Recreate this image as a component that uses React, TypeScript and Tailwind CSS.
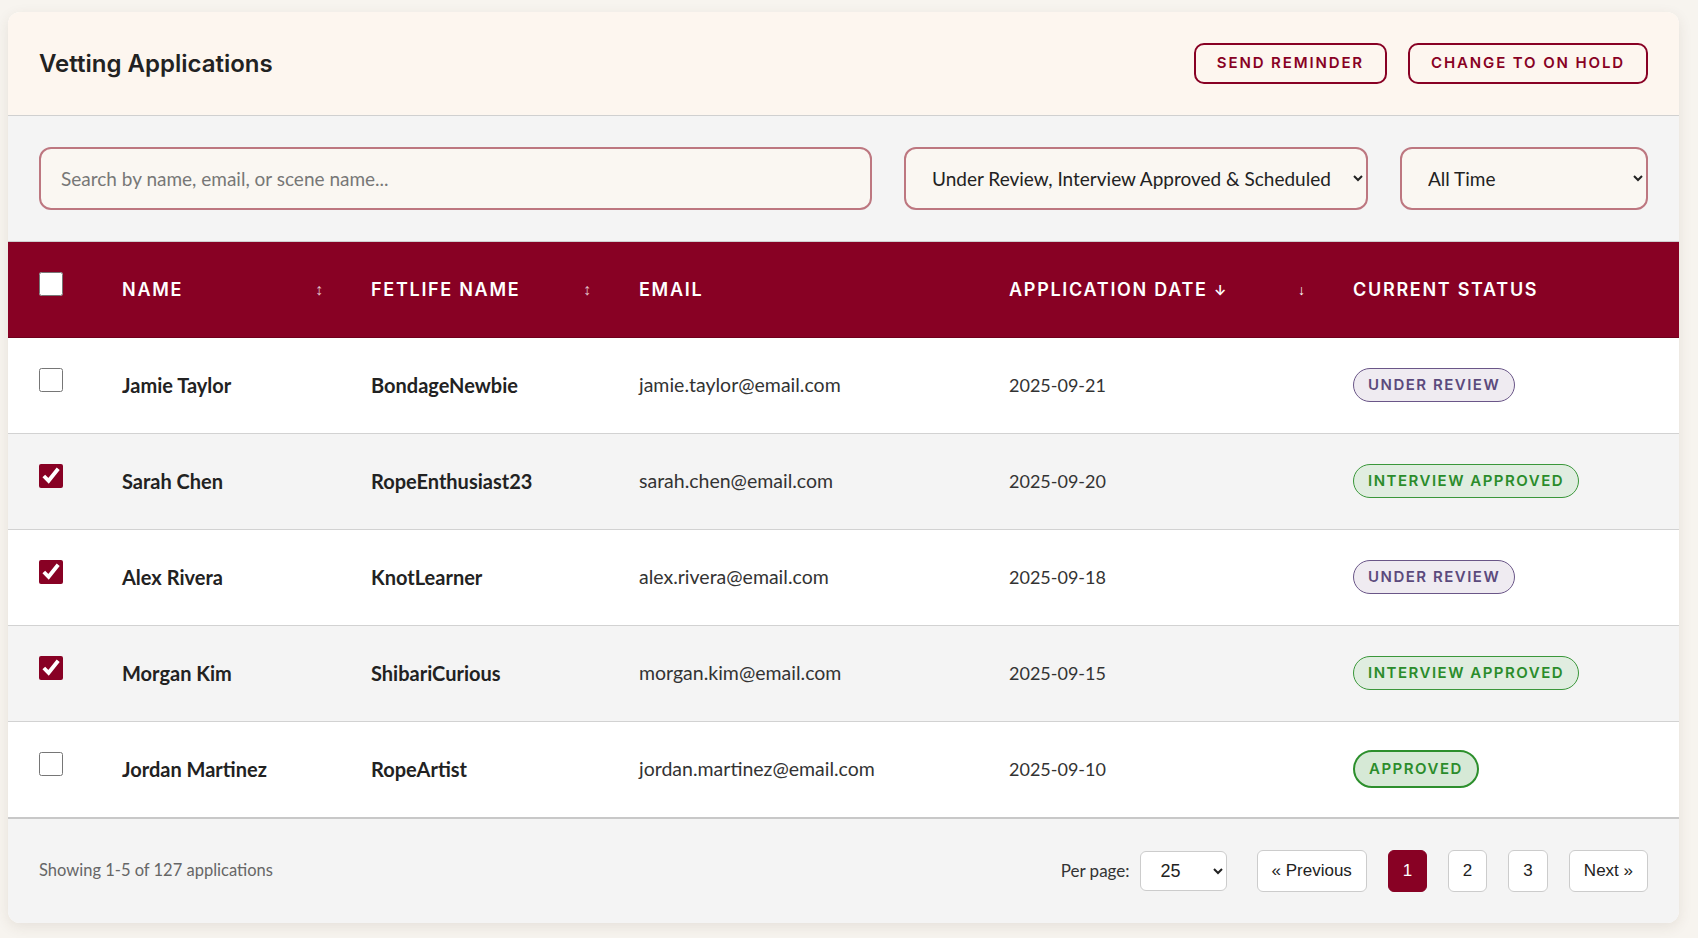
import React, { useState } from 'react';

type Status = 'under' | 'interview' | 'approved';

interface Application {
  id: number;
  name: string;
  fetlife: string;
  email: string;
  date: string;
  status: Status;
}

const applications: Application[] = [
  { id: 1, name: 'Jamie Taylor', fetlife: 'BondageNewbie', email: 'jamie.taylor@email.com', date: '2025-09-21', status: 'under' },
  { id: 2, name: 'Sarah Chen', fetlife: 'RopeEnthusiast23', email: 'sarah.chen@email.com', date: '2025-09-20', status: 'interview' },
  { id: 3, name: 'Alex Rivera', fetlife: 'KnotLearner', email: 'alex.rivera@email.com', date: '2025-09-18', status: 'under' },
  { id: 4, name: 'Morgan Kim', fetlife: 'ShibariCurious', email: 'morgan.kim@email.com', date: '2025-09-15', status: 'interview' },
  { id: 5, name: 'Jordan Martinez', fetlife: 'RopeArtist', email: 'jordan.martinez@email.com', date: '2025-09-10', status: 'approved' },
];

const heading = "font-['Inter',sans-serif]";
const body = "font-['Lato','Noto_Sans',sans-serif]";

function StatusBadge({ status }: { status: Status }) {
  if (status === 'under') {
    return (
      <span className={`${heading} inline-flex items-center h-[34px] px-[14px] rounded-full border border-[#6a5688] bg-[#efebf1] text-[#5b4a7c] text-[15px] font-semibold tracking-[0.1em]`}>
        UNDER REVIEW
      </span>
    );
  }
  if (status === 'interview') {
    return (
      <span className={`${heading} inline-flex items-center h-[34px] px-[14px] rounded-full border border-[#3a973a] bg-[#e0ede0] text-[#2b8c2b] text-[15px] font-semibold tracking-[0.1em]`}>
        INTERVIEW APPROVED
      </span>
    );
  }
  return (
    <span className={`${heading} inline-flex items-center h-[38px] px-[14px] rounded-full border-2 border-[#2c8f2c] bg-[#d6e9d6] text-[#2b8c2b] text-[15px] font-semibold tracking-[0.1em]`}>
      APPROVED
    </span>
  );
}

function SortMark({ children }: { children: React.ReactNode }) {
  return <span className="text-[16px] text-white/75 font-normal tracking-normal">{children}</span>;
}

export default function App() {
  const [selected, setSelected] = useState<Set<number>>(new Set([2, 3, 4]));

  const toggle = (id: number) => {
    const next = new Set(selected);
    if (next.has(id)) next.delete(id);
    else next.add(id);
    setSelected(next);
  };

  const thText = `${heading} text-[18px] font-semibold tracking-[0.095em] text-white`;
  const actionBtn = `${heading} h-[41px] px-[21px] rounded-[10px] border-2 border-[#880124] text-[#880124] text-[15px] font-semibold tracking-[0.125em]`;

  return (
    <div className="min-h-screen bg-[#f7f4ef] pt-[12px] pl-[8px]">
      <div className="w-[1671px] rounded-xl bg-white shadow-[0_4px_14px_rgba(80,60,40,0.10)] overflow-hidden">
        {/* header */}
        <div className="flex items-center justify-between bg-[#fdf6ef] px-[31px] py-[31px] border-b border-[#d0d0d0]">
          <h1 className={`${heading} text-[24px] font-semibold text-[#222]`}>Vetting Applications</h1>
          <div className="flex gap-[21px]">
            <button className={actionBtn}>SEND REMINDER</button>
            <button className={actionBtn}>CHANGE TO ON HOLD</button>
          </div>
        </div>

        {/* filters */}
        <div className={`${body} flex gap-[32px] bg-[#f4f4f4] px-[31px] py-[31px] border-b border-[#cfcfcf]`}>
          <input
            type="text"
            placeholder="Search by name, email, or scene name..."
            className="w-[833px] h-[63px] rounded-xl border-2 border-[#bd7780] bg-[#faf7f2] px-[20px] text-[19px] text-[#222] placeholder:text-[#777] outline-none"
          />
          <select
            defaultValue="review"
            className="w-[464px] h-[63px] rounded-xl border-2 border-[#bd7780] bg-[#faf7f2] pl-[22px] pr-[10px] text-[19px] text-[#222]"
          >
            <option value="review">Under Review, Interview Approved &amp; Scheduled</option>
            <option value="all">All Statuses</option>
          </select>
          <select
            defaultValue="all"
            className="w-[248px] h-[63px] rounded-xl border-2 border-[#bd7780] bg-[#faf7f2] pl-[22px] pr-[10px] text-[19px] text-[#222]"
          >
            <option value="all">All Time</option>
            <option value="30">Last 30 Days</option>
          </select>
        </div>

        {/* table */}
        <table className="w-full border-collapse table-fixed">
          <colgroup>
            <col className="w-[90px]" />
            <col className="w-[249px]" />
            <col className="w-[268px]" />
            <col className="w-[370px]" />
            <col className="w-[344px]" />
            <col />
          </colgroup>
          <thead>
            <tr className="bg-[#880124] h-[95px] border-b border-[#6f001c]">
              <th className="pl-[31px] text-left align-middle">
                <input type="checkbox" className="block w-6 h-6 mb-[10px] accent-[#880124]" />
              </th>
              <th className="px-6 text-left">
                <div className="flex items-center justify-between">
                  <span className={thText}>NAME</span>
                  <SortMark>↕</SortMark>
                </div>
              </th>
              <th className="px-6 text-left">
                <div className="flex items-center justify-between">
                  <span className={thText}>FETLIFE NAME</span>
                  <SortMark>↕</SortMark>
                </div>
              </th>
              <th className="px-6 text-left">
                <span className={thText}>EMAIL</span>
              </th>
              <th className="px-6 text-left">
                <div className="flex items-center justify-between">
                  <span className={thText}>
                    APPLICATION DATE <span className="text-[14px] tracking-normal">↓</span>
                  </span>
                  <span className="text-[14px] font-semibold text-white">↓</span>
                </div>
              </th>
              <th className="px-6 text-left">
                <span className={thText}>CURRENT STATUS</span>
              </th>
            </tr>
          </thead>
          <tbody className={body}>
            {applications.map((app, i) => (
              <tr key={app.id} className={`h-[96px] border-b border-[#d2d2d2] ${i % 2 === 1 ? 'bg-[#f4f4f4]' : 'bg-white'}`}>
                <td className="pl-[31px] align-middle">
                  <input
                    type="checkbox"
                    checked={selected.has(app.id)}
                    onChange={() => toggle(app.id)}
                    className="block w-6 h-6 mb-[10px] accent-[#880124]"
                  />
                </td>
                <td className="px-6 text-[20px] font-bold text-[#222]">{app.name}</td>
                <td className="px-6 text-[20px] font-bold text-[#222]">{app.fetlife}</td>
                <td className="px-6 text-[19.5px] text-[#333]">{app.email}</td>
                <td className="px-6 text-[18px] text-[#333]">{app.date}</td>
                <td className="px-6">
                  <StatusBadge status={app.status} />
                </td>
              </tr>
            ))}
          </tbody>
        </table>

        {/* footer */}
        <div className={`${body} flex items-center justify-between bg-[#f4f4f4] border-t-2 border-[#c8c8c8] -mt-px px-[31px] py-[31px]`}>
          <span className="text-[16.5px] text-[#666]">Showing 1-5 of 127 applications</span>
          <div className="flex items-center font-['Liberation_Sans',Arial,sans-serif] text-[17px] text-[#222]">
            <span className={`${body} text-[17px] text-[#333] mr-[10px]`}>Per page:</span>
            <select defaultValue="25" className="w-[87px] h-[40px] rounded-md border border-[#ccc] bg-white pl-[16px] pr-[8px] text-[18px] mr-[30px]">
              <option value="10">10</option>
              <option value="25">25</option>
              <option value="50">50</option>
            </select>
            <div className="flex gap-[21px]">
              <button className="h-[42px] px-[14px] rounded-md border border-[#ccc] bg-white">« Previous</button>
              <button className="h-[42px] w-[39px] rounded-md border border-[#880124] bg-[#880124] text-white">1</button>
              <button className="h-[42px] w-[39px] rounded-md border border-[#ccc] bg-white">2</button>
              <button className="h-[42px] w-[40px] rounded-md border border-[#ccc] bg-white">3</button>
              <button className="h-[42px] px-[14px] rounded-md border border-[#ccc] bg-white">Next »</button>
            </div>
          </div>
        </div>
      </div>
    </div>
  );
}
